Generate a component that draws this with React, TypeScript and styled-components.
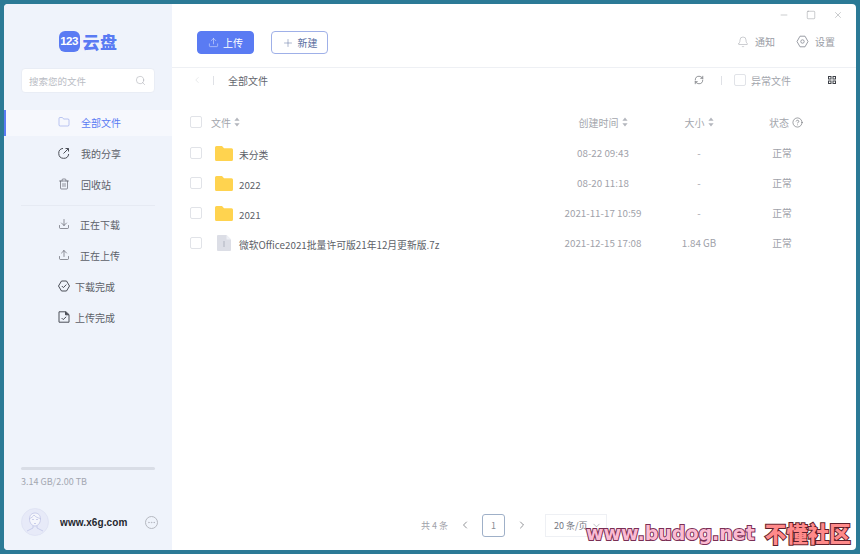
import React from 'react';
import styled, { createGlobalStyle } from 'styled-components';
import {
  Upload,
  Plus,
  Search,
  Folder,
  Trash2,
  Download,
  Bell,
  RefreshCw,
  ChevronLeft,
  ChevronRight,
  ChevronDown,
  CircleHelp,
  Minus,
  Square,
  X,
  Ellipsis,
} from 'lucide-react';

const GlobalStyle = createGlobalStyle`
  html, body { margin: 0; padding: 0; height: 100%; }
  body {
    background: #2b7a96;
    font-family: "Noto Sans CJK SC", "Noto Sans", sans-serif;
    overflow: hidden;
  }
  * { box-sizing: border-box; }
`;

const Desktop = styled.div`
  width: 860px;
  height: 554px;
  padding: 4px;
  position: relative;
`;

const Win = styled.div`
  height: 546px;
  display: flex;
  background: #fff;
  border-radius: 4px;
  overflow: hidden;
`;

const Sidebar = styled.aside`
  width: 168px;
  background: #eff3fb;
  display: flex;
  flex-direction: column;
  flex-shrink: 0;
`;

const LogoRow = styled.div`
  height: 64px;
  padding-top: 27px;
  display: flex;
  justify-content: center;
  align-items: flex-start;
  gap: 3px;
`;

const LogoMark = styled.span`
  width: 21px;
  height: 21px;
  border-radius: 6px;
  background: #5a7bf3;
  color: #fff;
  font: 700 11.5px/21px "Liberation Sans", sans-serif;
  letter-spacing: -0.5px;
  text-align: center;
`;

const LogoText = styled.span`
  color: #5a7bf3;
  font-size: 17px;
  font-weight: 900;
  line-height: 21px;
  letter-spacing: 0.5px;
`;

const SearchBox = styled.div`
  margin: 0 17px;
  height: 25px;
  background: #fff;
  border: 1px solid #e9edf5;
  border-radius: 4px;
  display: flex;
  align-items: center;
  justify-content: space-between;
  padding: 0 8px 0 7px;
  color: #b9bcc4;
  font-size: 9.5px;
`;

const Nav = styled.nav`
  margin-top: 17px;
  display: flex;
  flex-direction: column;
`;

const NavItem = styled.div<{ $active?: boolean; $gap: number }>`
  height: 26px;
  margin-bottom: 5px;
  padding-bottom: 2px;
  display: flex;
  align-items: center;
  gap: ${(p) => p.$gap}px;
  padding-left: ${(p) => (p.$active ? 52 : 54)}px;
  font-size: 10px;
  color: ${(p) => (p.$active ? '#5a7bf3' : '#5c5f68')};
  background: ${(p) => (p.$active ? '#f6f8fd' : 'transparent')};
  border-left: ${(p) => (p.$active ? '2px solid #5a7bf3' : 'none')};
`;

const NavIcon = styled.span`
  width: 12px;
  height: 12px;
  display: flex;
  color: #4b4e57;
  flex-shrink: 0;
`;

const Divider = styled.div`
  height: 1px;
  margin: 2px 17px 6px;
  background: #e6eaf3;
`;

const SideBottom = styled.div`
  margin-top: auto;
  padding: 0 17px 14px;
`;

const StorageBar = styled.div`
  height: 3px;
  border-radius: 2px;
  background: #d9dde6;
`;

const StorageText = styled.div`
  margin-top: 5px;
  font-size: 9px;
  line-height: 14px;
  color: #a3a7b1;
`;

const UserRow = styled.div`
  margin-top: 19px;
  display: flex;
  align-items: center;
  gap: 11px;
`;

const UserName = styled.span`
  flex: 1;
  font: 700 10px "Liberation Sans", sans-serif;
  letter-spacing: 0.1px;
  color: #25272e;
`;

const MoreBtn = styled.span`
  width: 13px;
  height: 13px;
  margin-right: -3px;
  border: 1px solid #b5b8c0;
  border-radius: 50%;
  display: flex;
  align-items: center;
  justify-content: center;
  color: #a3a6ae;
`;

const Main = styled.main`
  flex: 1;
  min-width: 0;
  display: flex;
  flex-direction: column;
`;

const TopBar = styled.header`
  height: 64px;
  border-bottom: 1px solid #eef0f4;
  padding: 27px 21px 0 25px;
  display: flex;
  align-items: flex-start;
  gap: 17px;
  position: relative;
`;

const Button = styled.button<{ $primary?: boolean }>`
  width: 57px;
  height: 23px;
  padding: 0;
  border-radius: 4px;
  border: 1px solid ${(p) => (p.$primary ? '#5a7bf3' : '#9fb0e8')};
  background: ${(p) => (p.$primary ? '#5a7bf3' : '#fff')};
  color: ${(p) => (p.$primary ? '#fff' : '#5b6f9f')};
  font: inherit;
  font-size: 10px;
  display: flex;
  align-items: center;
  justify-content: center;
  gap: 4px;
`;

const WinControls = styled.div`
  position: absolute;
  top: 6px;
  right: 13px;
  display: flex;
  gap: 17px;
  color: #7f8289;
`;

const TopRight = styled.div`
  margin-left: auto;
  padding-top: 3px;
  display: flex;
  align-items: center;
  gap: 21px;
`;

const TopAction = styled.span`
  display: flex;
  align-items: center;
  gap: 6px;
  font-size: 10px;
  color: #9a9da5;
`;

const Crumbs = styled.div`
  height: 24px;
  padding: 0 20px;
  display: flex;
  align-items: center;
  font-size: 10px;
  color: #63666e;
`;

const VBar = styled.span<{ $left: number; $right: number }>`
  width: 1px;
  height: 9px;
  background: #dfe1e6;
  margin: 0 ${(p) => p.$right}px 0 ${(p) => p.$left}px;
`;

const CrumbRight = styled.div`
  margin-left: auto;
  display: flex;
  align-items: center;
  color: #9a9da5;
`;

const CrumbLabel = styled.span`
  margin: 0 37px 0 5px;
  color: #a3a6ad;
`;

const Check = styled.span`
  width: 12px;
  height: 12px;
  border: 1px solid #e1e3e8;
  border-radius: 2px;
  background: #fff;
  flex-shrink: 0;
`;

const Table = styled.div`
  margin-top: 15px;
  padding: 0 27px 0 18px;
  flex: 1;
`;

const Row = styled.div<{ $header?: boolean }>`
  height: 30px;
  display: grid;
  grid-template-columns: 353px 120px 72px 94px;
  align-items: center;
  font-size: ${(p) => (p.$header ? '10px' : '9.8px')};
  color: ${(p) => (p.$header ? '#a3a6ad' : '#9fa2aa')};
  margin-bottom: ${(p) => (p.$header ? '1px' : '0')};
`;

const NameCell = styled.div<{ $gap: number }>`
  display: flex;
  align-items: center;
  gap: ${(p) => p.$gap}px;
  color: #5c5f68;
`;

const FileIcon = styled.span`
  width: 18px;
  margin-left: 7px;
  display: flex;
  justify-content: center;
`;

const HeadLabel = styled.span`
  display: flex;
  align-items: center;
  gap: 3px;
  color: #a3a6ad;
`;

const Cell = styled.div<{ $shift?: number }>`
  display: flex;
  justify-content: center;
  align-items: center;
  gap: 3px;
  padding-left: ${(p) => p.$shift ?? 0}px;
  white-space: nowrap;
`;

const RowName = styled.span`
  position: relative;
  top: 2px;
`;

const Pager = styled.footer`
  height: 46px;
  padding: 0 0 4px 249px;
  display: flex;
  align-items: center;
  font-size: 9px;
  color: #9fa2aa;
`;

const PagerLabel = styled.span`
  margin-right: 11px;
`;

const PageNum = styled.span`
  width: 23px;
  height: 23px;
  margin: 0 11px;
  border: 1px solid #9fb0c8;
  border-radius: 3px;
  display: flex;
  align-items: center;
  justify-content: center;
  color: #8a8d94;
`;

const PageSize = styled.span`
  width: 62px;
  height: 23px;
  margin-left: 17px;
  padding-left: 8px;
  border: 1px solid #eef0f4;
  display: flex;
  align-items: center;
  gap: 3px;
  color: #75787f;
`;

const Watermark = styled.div`
  position: absolute;
  left: 586px;
  bottom: 8px;
  display: flex;
  align-items: center;
  gap: 10px;
  white-space: nowrap;
  font-weight: 700;
  line-height: 26px;
`;

const MarkLatin = styled.span`
  font-family: "DejaVu Sans", sans-serif;
  font-size: 19px;
  color: #fbbbd2;
  -webkit-text-stroke: 2px #7a2f55;
  paint-order: stroke fill;
`;

const MarkCjk = styled.span`
  font-family: "Noto Sans CJK SC", sans-serif;
  font-weight: 900;
  font-size: 21.5px;
  color: #ff8a8a;
  -webkit-text-stroke: 2px #5e1f2a;
  paint-order: stroke fill;
`;

const SortIcon = () => (
  <svg width="6" height="10" viewBox="0 0 6 10" fill="#b3b6bd">
    <path d="M3 0.5 5.6 3.8H0.4Z" />
    <path d="M3 9.5 0.4 6.2H5.6Z" />
  </svg>
);

const ShareIcon = () => (
  <svg width="12" height="12" viewBox="0 0 12 12" fill="none" stroke="currentColor" strokeWidth="1">
    <path d="M5 1.4A5 5 0 1 0 10.7 7" />
    <path d="M5.5 6.5 10.5 1.5M7.5 1.5h3v3" />
  </svg>
);

const HexCheckIcon = () => (
  <svg width="12" height="12" viewBox="0 0 12 12" fill="none" stroke="currentColor" strokeWidth="1">
    <path d="M3.5 1h5L11.5 6 8.5 11h-5L0.5 6Z" strokeLinejoin="round" />
    <path d="M3.8 6 5.4 7.6 8.3 4.6" />
  </svg>
);

const FileCheckIcon = () => (
  <svg width="12" height="12" viewBox="0 0 12 12" fill="none" stroke="currentColor" strokeWidth="1">
    <path d="M1 0.8h7L11 3.6v7.6H1Z" />
    <path d="M7.5 0.8v3H11" fill="currentColor" />
    <path d="M3.6 7 5.2 8.6 8.2 5.8" />
  </svg>
);

const GearIcon = () => (
  <svg width="13" height="13" viewBox="0 0 13 13" fill="none" stroke="#9a9da5" strokeWidth="1">
    <path d="M4 1.2h5L12 6.5 9 11.8H4L1 6.5Z" strokeLinejoin="round" />
    <circle cx="6.5" cy="6.5" r="1.7" />
  </svg>
);

const GridIcon = () => (
  <svg width="8" height="8" viewBox="0 0 8 8" fill="none" stroke="#3d4047" strokeWidth="1">
    <rect x="0.5" y="0.5" width="2.5" height="2.5" />
    <rect x="5" y="0.5" width="2.5" height="2.5" />
    <rect x="0.5" y="5" width="2.5" height="2.5" />
    <rect x="5" y="5" width="2.5" height="2.5" />
  </svg>
);

const FolderIcon = () => (
  <svg width="18" height="15" viewBox="0 0 18 15">
    <path d="M1.5 0H7l2 2.2h7.5A1.5 1.5 0 0 1 18 3.7v9.8a1.5 1.5 0 0 1-1.5 1.5h-15A1.5 1.5 0 0 1 0 13.5v-12A1.5 1.5 0 0 1 1.5 0Z" fill="#ffd34f" />
  </svg>
);

const ArchiveIcon = () => (
  <svg width="14" height="16" viewBox="0 0 14 16">
    <path d="M1 0h8.5L14 4.5V15a1 1 0 0 1-1 1H1a1 1 0 0 1-1-1V1a1 1 0 0 1 1-1Z" fill="#dcdee6" />
    <path d="M9.5 0 14 4.5H9.5Z" fill="#eef0f5" />
    <rect x="6" y="6" width="2" height="6" fill="#c6c9d3" />
  </svg>
);

const AvatarIcon = () => (
  <svg width="28" height="28" viewBox="0 0 28 28" fill="none" stroke="#bfc4e6" strokeWidth="0.8">
    <circle cx="14" cy="14" r="13.5" fill="#e7eaf8" stroke="#dde1f3" />
    <path d="M8.5 11c0-4 2.5-6 5.5-6s5.5 2 5.5 6c0 4-2.500 7-5.5 7s-5.5-3-5.5-7Z" fill="#f5f6fc" />
    <path d="M8.5 10.5c2-.5 3.5-2 4.5-3.500 1.5 2 4 3 6.500 3.500" />
    <path d="M11 11.5h2M15 11.5h2M13 15.5h2" />
    <path d="M12 18v2l-6 3M16 18v2l6 3" />
  </svg>
);

const navTop = [
  { label: '全部文件', icon: <Folder size={12} strokeWidth={1} color="#7d92e4" />, gap: 11, active: true },
  { label: '我的分享', icon: <ShareIcon />, gap: 11 },
  { label: '回收站', icon: <Trash2 size={12} strokeWidth={1.2} />, gap: 11 },
];

const navBottom = [
  { label: '正在下载', icon: <Download size={12} strokeWidth={1.2} />, gap: 10 },
  { label: '正在上传', icon: <Upload size={12} strokeWidth={1.2} />, gap: 10 },
  { label: '下载完成', icon: <HexCheckIcon />, gap: 5 },
  { label: '上传完成', icon: <FileCheckIcon />, gap: 5 },
];

const files = [
  { name: '未分类', time: '08-22 09:43', size: '-', folder: true },
  { name: '2022', time: '08-20 11:18', size: '-', folder: true },
  { name: '2021', time: '2021-11-17 10:59', size: '-', folder: true },
  { name: '微软Office2021批量许可版21年12月更新版.7z', time: '2021-12-15 17:08', size: '1.84 GB', folder: false },
];

const App: React.FC = () => {
  const renderNav = (item: { label: string; icon: React.ReactNode; gap: number; active?: boolean }) => (
    <NavItem key={item.label} $active={item.active} $gap={item.gap}>
      <NavIcon>{item.icon}</NavIcon>
      {item.label}
    </NavItem>
  );

  return (
    <Desktop>
      <GlobalStyle />
      <Win>
        <Sidebar>
          <LogoRow>
            <LogoMark>123</LogoMark>
            <LogoText>云盘</LogoText>
          </LogoRow>
          <SearchBox>
            搜索您的文件
            <Search size={11} strokeWidth={1} color="#9a9da5" />
          </SearchBox>
          <Nav>
            {navTop.map(renderNav)}
            <Divider />
            {navBottom.map(renderNav)}
          </Nav>
          <SideBottom>
            <StorageBar />
            <StorageText>3.14 GB/2.00 TB</StorageText>
            <UserRow>
              <AvatarIcon />
              <UserName>www.x6g.com</UserName>
              <MoreBtn>
                <Ellipsis size={9} strokeWidth={1.2} />
              </MoreBtn>
            </UserRow>
          </SideBottom>
        </Sidebar>
        <Main>
          <TopBar>
            <WinControls>
              <Minus size={10} strokeWidth={1} />
              <Square size={10} strokeWidth={1} />
              <X size={10} strokeWidth={1} />
            </WinControls>
            <Button $primary>
              <Upload size={11} strokeWidth={1} />
              上传
            </Button>
            <Button>
              <Plus size={12} strokeWidth={1} />
              新建
            </Button>
            <TopRight>
              <TopAction>
                <Bell size={12} strokeWidth={1} />
                通知
              </TopAction>
              <TopAction>
                <GearIcon />
                设置
              </TopAction>
            </TopRight>
          </TopBar>
          <Crumbs>
            <ChevronLeft size={10} strokeWidth={1} color="#c9cbd1" />
            <VBar $left={11} $right={14} />
            全部文件
            <CrumbRight>
              <RefreshCw size={10} strokeWidth={1.5} color="#55585f" />
              <VBar $left={17} $right={12} />
              <Check />
              <CrumbLabel>异常文件</CrumbLabel>
              <GridIcon />
            </CrumbRight>
          </Crumbs>
          <Table>
            <Row $header>
              <NameCell $gap={9}>
                <Check />
                <HeadLabel>
                  文件 <SortIcon />
                </HeadLabel>
              </NameCell>
              <Cell>
                创建时间 <SortIcon />
              </Cell>
              <Cell>
                大小 <SortIcon />
              </Cell>
              <Cell $shift={8}>
                状态 <CircleHelp size={11} strokeWidth={1.2} color="#55585f" />
              </Cell>
            </Row>
            {files.map((f) => (
              <Row key={f.name}>
                <NameCell $gap={6}>
                  <Check />
                  <FileIcon>{f.folder ? <FolderIcon /> : <ArchiveIcon />}</FileIcon>
                  <RowName>{f.name}</RowName>
                </NameCell>
                <Cell>{f.time}</Cell>
                <Cell>{f.size}</Cell>
                <Cell>正常</Cell>
              </Row>
            ))}
          </Table>
          <Pager>
            <PagerLabel>共 4 条</PagerLabel>
            <ChevronLeft size={12} strokeWidth={1.3} color="#55585f" />
            <PageNum>1</PageNum>
            <ChevronRight size={12} strokeWidth={1.3} color="#55585f" />
            <PageSize>
              20 条/页 <ChevronDown size={11} strokeWidth={1} />
            </PageSize>
          </Pager>
        </Main>
      </Win>
      <Watermark>
        <MarkLatin>www.budog.net</MarkLatin>
        <MarkCjk>不懂社区</MarkCjk>
      </Watermark>
    </Desktop>
  );
};

export default App;
